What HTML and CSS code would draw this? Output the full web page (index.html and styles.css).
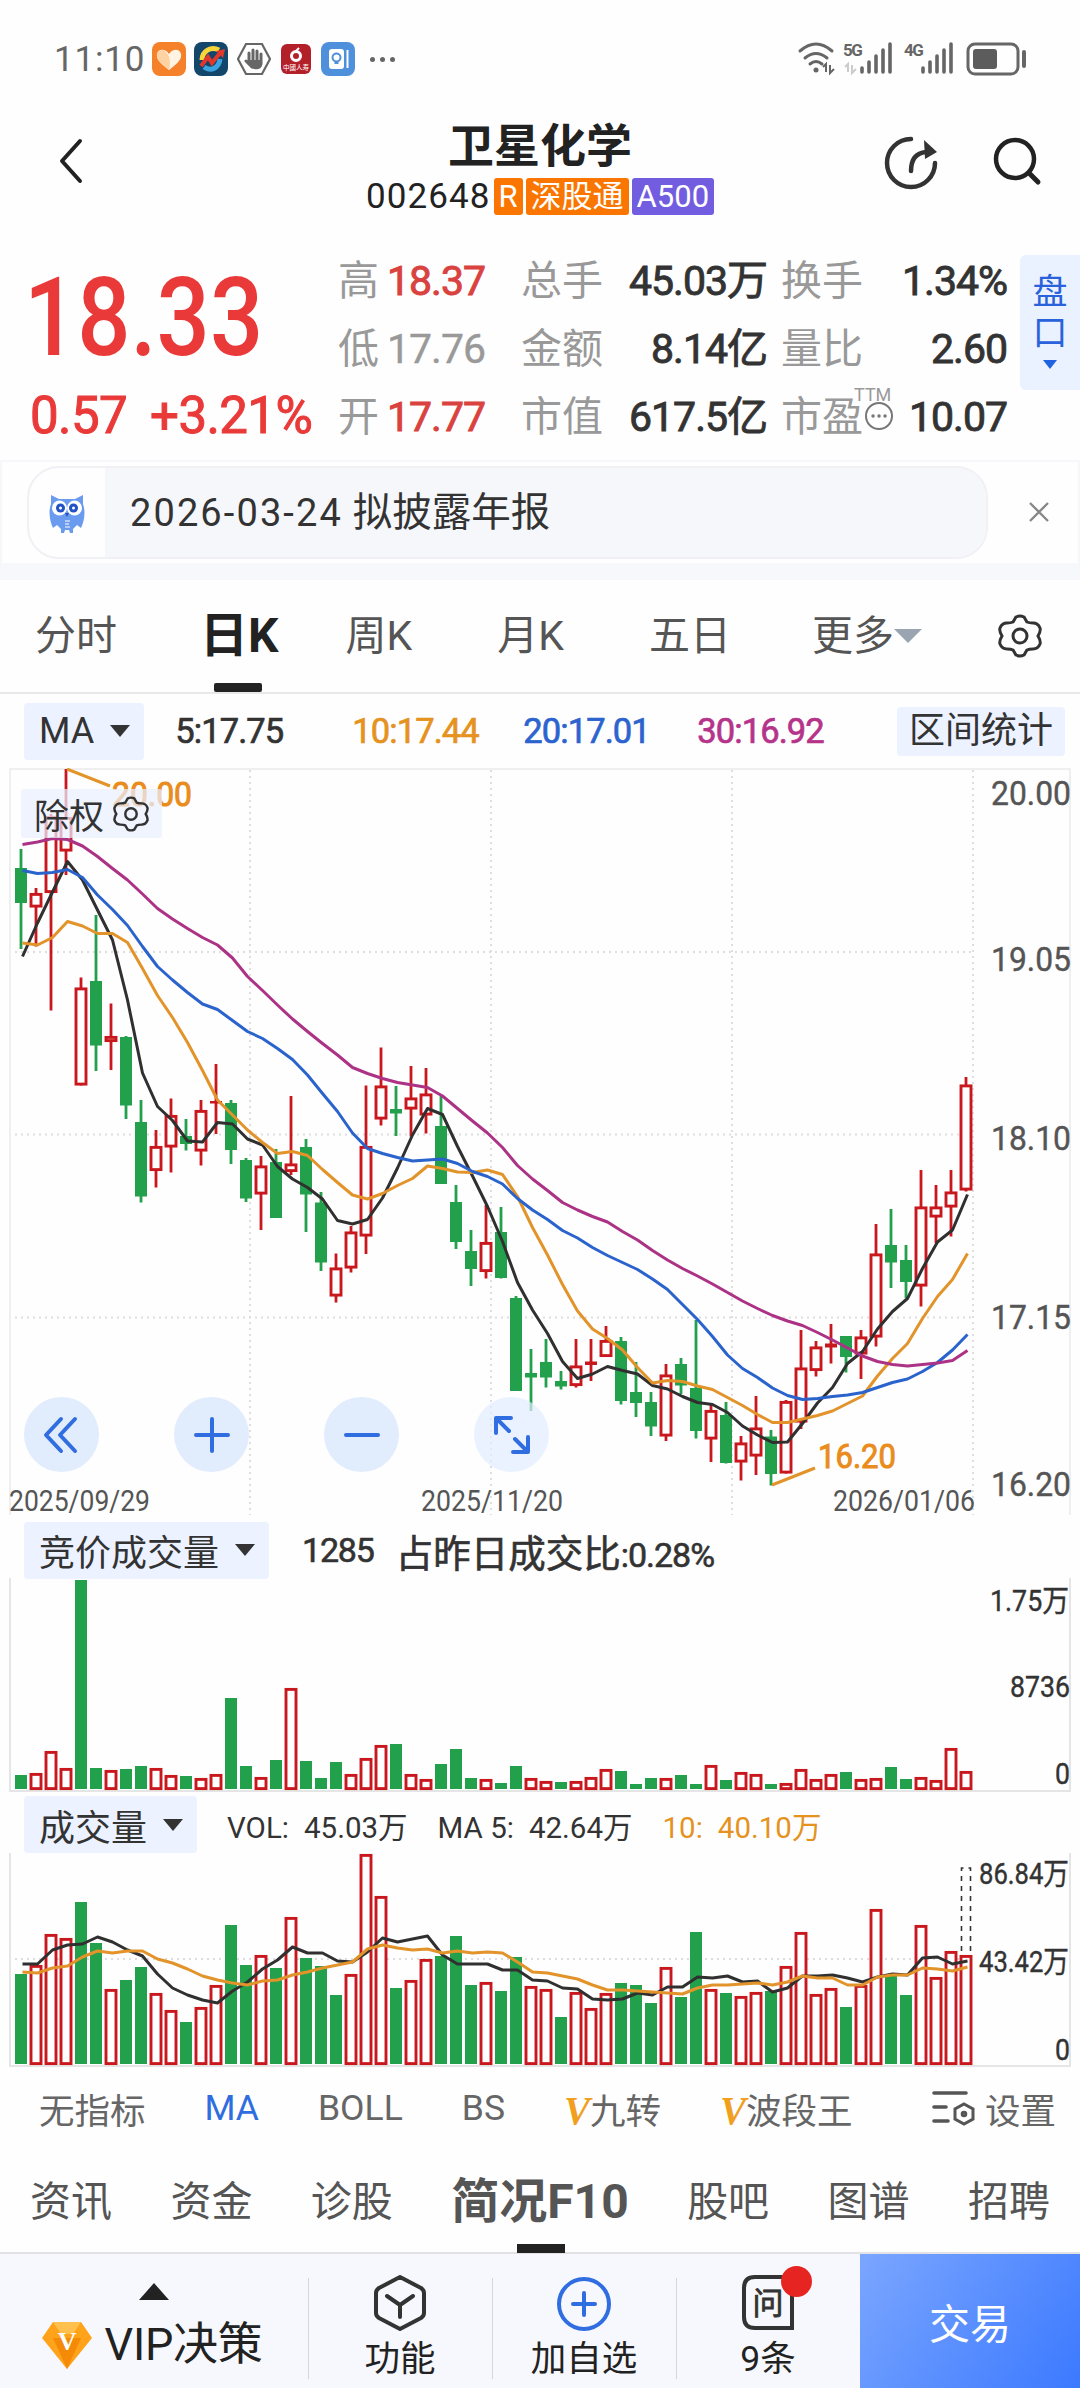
FILE: index.html
```html
<!DOCTYPE html>
<html lang="zh-CN">
<head>
    <meta charset="UTF-8">
    <meta name="viewport" content="width=device-width, initial-scale=1.0">
    <title>卫星化学 002648</title>
    <link rel="stylesheet" href="styles.css">
</head>
<body>
    <div class="status-bar">
        <span class="time">11:10</span>
        <svg class="app-icon" viewBox="0 0 34 34">
            <rect width="34" height="34" rx="8" fill="#f5812a"/>
            <path d="M17 28C8 21 4 17 5 12c1-5 8-6 12 0 4-6 11-5 12 0 1 5-3 9-12 16z" fill="#fff3e4"/>
            <path d="M17 28C8 21 4 17 5 12c1-4 6-5 9-2 4 4 5 11 3 18z" fill="#ffd2a3"/>
        </svg>
        <svg class="app-icon" viewBox="0 0 34 34">
            <rect width="34" height="34" rx="8" fill="#12466b"/>
            <path d="M25 8C17 4 8 9 8 18" fill="none" stroke="#f7d53a" stroke-width="5"/>
            <path d="M10 25c7 5 15 1 16-8" fill="none" stroke="#3aa3e0" stroke-width="5"/>
            <path d="M7 24l7-9 4 6 8-10" fill="none" stroke="#e2382c" stroke-width="4"/>
            <path d="M22 9l9-2-2 9z" fill="#e2382c"/>
        </svg>
        <svg class="app-icon" viewBox="0 0 34 34">
            <path d="M9 2h16l8 15-8 15H9L1 17z" fill="none" stroke="#666" stroke-width="2.2"/>
            <path d="M12 11v9M16 8v12M20 9v11M24 12v10M9 19l6 6" stroke="#666" stroke-width="3" stroke-linecap="round"/>
            <path d="M11 18h14v5c0 5-10 6-12 1z" fill="#666"/>
        </svg>
        <svg class="app-icon narrow" viewBox="0 0 30 30">
            <rect width="30" height="30" rx="6" fill="#b3202a"/>
            <circle cx="15" cy="12" r="4.5" fill="none" stroke="#fff" stroke-width="3"/>
            <path d="M14 8l4-4" stroke="#fff" stroke-width="2"/>
            <text x="15" y="26" font-size="6.5" text-anchor="middle" fill="#fff">中國人寿</text>
        </svg>
        <svg class="app-icon" viewBox="0 0 34 34">
            <rect width="34" height="34" rx="8" fill="#4f90dc"/>
            <rect x="8" y="7" width="15" height="20" rx="3" fill="#fff"/>
            <circle cx="15.500" cy="15.500" r="4" fill="none" stroke="#4f90dc" stroke-width="2"/>
            <path d="M13.500 21h4" stroke="#4f90dc" stroke-width="2"/>
            <path d="M26.500 8v18" stroke="#fff" stroke-width="2"/>
        </svg>
        <span class="more"><i></i><i></i><i></i></span>
        <svg class="signals" viewBox="0 0 232 36" width="232" height="36">
            <g fill="none" stroke="#666" stroke-width="3" stroke-linecap="round">
                <path d="M2 10q16-14 32 0M7 17q11-9 22 0M12 23q6-5 12 0"/>
            </g>
            <circle cx="18" cy="29" r="2.500" fill="#666"/>
            <path d="M28 31v-8l-3 3M32 24v8l4-4" fill="none" stroke="#666" stroke-width="2"/>
            <text x="45" y="15" class="net">5G</text>
            <path d="M50 31v-8l-3 3M54 24v8l4-4" fill="none" stroke="#ccc" stroke-width="2"/>
            <path d="M64 31v-4M71 31V21M78 31V15M85 31V9M92 31V3M125 31v-4M132 31V21M139 31V15M146 31V9M153 31V3" stroke="#666" stroke-width="3.600" stroke-linecap="round"/>
            <text x="106" y="15" class="net">4G</text>
            <rect x="170" y="3" width="50" height="30" rx="7" fill="none" stroke="#666" stroke-width="3"/>
            <rect x="175" y="8" width="24" height="20" rx="3" fill="#5c5c5c"/>
            <path d="M226 11v14" stroke="#666" stroke-width="4" stroke-linecap="round"/>
        </svg>
    </div>

    <header class="header">
        <svg class="back" width="26" height="46" viewBox="0 0 26 46"><path d="M22 3L4 23l18 20" fill="none" stroke="#222" stroke-width="4" stroke-linecap="round" stroke-linejoin="round"/></svg>
        <div class="stock">
            <h1>卫星化学</h1>
            <div class="code">
                <span>002648</span><b class="tag">R</b><b class="tag">深股通</b><b class="tag purple">A500</b>
            </div>
        </div>
        <svg class="share" width="56" height="56" viewBox="0 0 56 56">
            <path d="M28 4a24 24 0 1 0 24 24M28 4h-1M28 36c0-11 4-18 15-19" fill="none" stroke="#333" stroke-width="4.500" stroke-linecap="round"/>
            <path d="M41 5l13 12-12 7z" fill="#333"/>
        </svg>
        <svg class="search" width="50" height="50" viewBox="0 0 50 50">
            <circle cx="22" cy="22" r="19" fill="none" stroke="#222" stroke-width="4.500"/>
            <path d="M37 37l8 8" stroke="#222" stroke-width="5" stroke-linecap="round"/>
        </svg>
    </header>

    <section class="quote">
        <div class="price">
            <div class="last">18.33</div>
            <div class="change"><span>0.57</span><span>+3.21%</span></div>
        </div>
        <div class="stats">
            <label>高</label><b class="up">18.37</b><label>总手</label><b>45.03万</b><label>换手</label><b>1.34%</b>
            <label>低</label><b class="flat">17.76</b><label>金额</label><b>8.14亿</b><label>量比</label><b>2.60</b>
            <label>开</label><b class="up">17.77</b><label>市值</label><b>617.5亿</b><label class="pe">市盈<sup>TTM</sup><svg viewBox="0 0 30 30"><circle cx="15" cy="15" r="13"/><path d="M9 15h.1M15 15h.1M21 15h.1"/></svg></label><b>10.07</b>
        </div>
        <div class="side-tab"><span>盘</span><span>口</span><i class="arrow"></i></div>
    </section>

    <section class="notice">
        <div class="pill">
            <div class="owl">
                <svg width="36" height="40" viewBox="0 0 36 40">
                    <path d="M2 1l8 4h16l8-4v9c3 8 1 18-2 24l-4-3-4 4v4h-3l-1-3h-4l-1 3h-3v-4l-4-4-4 3C1 28-1 17 2 10z" fill="#6b9bef"/>
                    <circle cx="10.500" cy="14" r="7.500" fill="#fff"/><circle cx="25.500" cy="14" r="7.500" fill="#fff"/>
                    <circle cx="11.500" cy="14" r="4.500" fill="#2352c4"/><circle cx="24.500" cy="14" r="4.500" fill="#2352c4"/>
                    <circle cx="11.500" cy="14" r="1.500" fill="#fff"/><circle cx="24.500" cy="14" r="1.500" fill="#fff"/>
                    <path d="M16 19h4l-2 4z" fill="#2352c4"/>
                    <path d="M16 27h5M16 30h4M16 33h5" stroke="#fff" stroke-width="1.200"/>
                </svg>
            </div>
            <div class="notice-text"><span>2026-03-24</span> 拟披露年报</div>
        </div>
        <svg class="close" width="22" height="22" viewBox="0 0 22 22"><path d="M2 2l18 18M20 2L2 20" stroke="#888" stroke-width="2.400"/></svg>
    </section>

    <nav class="period">
        <span class="first">分时</span>
        <span class="active">日K</span>
        <span>周K</span>
        <span>月K</span>
        <span>五日</span>
        <span class="dropdown">更多<i></i></span>
        <svg width="44" height="44" viewBox="0 0 44 44"><use href="#gear"/></svg>
    </nav>

    <div class="ma-bar">
        <button class="pick">MA<i></i></button>
        <span class="ma5">5:17.75</span>
        <span class="ma10">10:17.44</span>
        <span class="ma20">20:17.01</span>
        <span class="ma30">30:16.92</span>
        <button class="range">区间统计</button>
    </div>

    <div class="chart">
        <svg id="kline" width="1080" height="750" viewBox="0 0 1080 750"></svg>
        <div class="rights">除权<svg width="36" height="36" viewBox="0 0 44 44"><use href="#gear"/></svg></div>
        <div class="tools">
            <button><svg viewBox="0 0 40 40"><path d="M19 4L4 20l15 16M33 4L18 20l15 16"/></svg></button>
            <button><svg viewBox="0 0 40 40"><path d="M20 4v32M4 20h32"/></svg></button>
            <button><svg viewBox="0 0 40 40"><path d="M4 20h32"/></svg></button>
            <button class="light"><svg viewBox="0 0 40 40"><path d="M4 18V3h15M5 4l12 12M36 22v15H21M35 36L23 24"/></svg></button>
        </div>
    </div>

    <div class="sub-bar auction">
        <button class="pick">竞价成交量<i></i></button>
        <span>1285</span>
        <span class="ratio">占昨日成交比<b>:0.28%</b></span>
    </div>
    <svg id="auction" class="sub-chart" width="1080" height="216" viewBox="0 0 1080 216"></svg>

    <div class="sub-bar volume">
        <button class="pick">成交量<i></i></button>
        <span>VOL:&ensp;45.03万</span>
        <span>MA 5:&ensp;42.64万</span>
        <span class="ma10">10:&ensp;40.10万</span>
    </div>
    <svg id="volume" class="sub-chart" width="1080" height="216" viewBox="0 0 1080 216"></svg>

    <nav class="indicators">
        <span>无指标</span>
        <span class="on">MA</span>
        <span>BOLL</span>
        <span>BS</span>
        <span><em>V</em>九转</span>
        <span><em>V</em>波段王</span>
        <span class="setting">
            <svg width="44" height="36" viewBox="0 0 44 36" fill="none" stroke="#555" stroke-width="3.600" stroke-linecap="round">
                <path d="M2 3h32M2 17h12M2 31h14"/><path d="M32 14l9 5v10l-9 5-9-5V19z" stroke-width="3"/><circle cx="32" cy="24" r="1.500"/>
            </svg>设置
        </span>
    </nav>

    <nav class="sections">
        <span>资讯</span><span>资金</span><span>诊股</span><span class="active">简况F10</span><span>股吧</span><span>图谱</span><span>招聘</span>
    </nav>

    <footer class="bottom">
        <div class="vip">
            <i class="up-arrow"></i>
            <div>
                <svg width="50" height="47" viewBox="0 0 50 47">
                    <path d="M11 0h28l11 16-25 31L0 16z" fill="#ffa31a"/>
                    <path d="M11 0h28l-8 12H19z" fill="#ffc04d"/><path d="M25 47L11 16h28z" fill="#f58a07"/>
                    <text x="25" y="28" class="gem">V</text>
                </svg>VIP决策
            </div>
        </div>
        <div class="item">
            <svg width="56" height="58" viewBox="0 0 56 58" fill="none" stroke="#333" stroke-width="4" stroke-linecap="round" stroke-linejoin="round"><path d="M28 3l21 11q3 2 3 5v20q0 3-3 5L28 55 7 44q-3-2-3-5V19q0-3 3-5zM15 22l13 9 13-9M28 31v12"/></svg>
            <span>功能</span>
        </div>
        <div class="item">
            <svg width="56" height="58" viewBox="0 0 56 58" fill="none" stroke="#2f6de0" stroke-width="4" stroke-linecap="round"><circle cx="28" cy="30" r="25"/><path d="M28 19v22M17 30h22"/></svg>
            <span>加自选</span>
        </div>
        <div class="item">
            <svg width="56" height="58" viewBox="0 0 56 58"><path d="M15 3h26q11 0 11 11v40H15Q4 54 4 43V14Q4 3 15 3z" fill="none" stroke="#333" stroke-width="4"/><text x="28" y="40" class="ask">问</text></svg>
            <span>9条</span>
            <i class="dot"></i>
        </div>
        <button class="trade">交易</button>
    </footer>

    <svg width="0" height="0" class="defs">
        <symbol id="gear" viewBox="0 0 44 44">
            <path d="M18 3q4-2 8 0l3 5q2 1 6 1 5 0 7 5 1 3-2 8 3 5 2 8-2 5-7 5-4 0-6 1l-3 5q-4 2-8 0l-3-5q-2-1-6-1-5 0-7-5-1-3 2-8-3-5-2-8 2-5 7-5 4 0 6-1z" fill="none" stroke="#333" stroke-width="3"/>
            <circle cx="22" cy="22" r="7" fill="none" stroke="#333" stroke-width="3"/>
        </symbol>
    </svg>

    <script src="chart.js"></script>
</body>
</html>
```
FILE: styles.css
```css
* {
    margin: 0;
    padding: 0;
    box-sizing: border-box;
}

body {
    width: 1080px;
    height: 2388px;
    overflow: hidden;
    background: #fefefe;
    color: #333;
    font-family: Roboto, "Noto Sans CJK SC", sans-serif;
    display: flex;
    flex-direction: column;
}

button {
    border: none;
    background: none;
    font: inherit;
    color: inherit;
}

b, i, em {
    font-style: normal;
    font-weight: 400;
}

.defs {
    position: absolute;
}

/* status bar */
.status-bar {
    height: 118px;
    padding: 0 50px 0 54px;
    display: flex;
    align-items: center;
    color: #666;
}

.time {
    width: 98px;
    font-size: 35px;
    letter-spacing: 0.8px;
}

.app-icon {
    width: 34px;
    height: 34px;
    margin-right: 8.4px;
}

.app-icon.narrow {
    width: 30px;
    height: 30px;
    margin: 0 10px 0 2px;
}

.more {
    display: flex;
    gap: 5px;
    margin-left: 6px;
}

.more i {
    width: 5px;
    height: 5px;
    border-radius: 50%;
    background: #666;
}

.signals {
    margin-left: auto;
    overflow: visible;
}

.net {
    font-size: 17px;
    font-weight: 700;
    fill: #666;
    letter-spacing: -1.5px;
}

/* title */
.header {
    height: 122px;
    padding: 0 35px 0 58px;
    display: flex;
    align-items: flex-start;
}

.back {
    margin-top: 20px;
}

.stock {
    width: 400px;
    margin-left: 256px;
    text-align: center;
}

h1 {
    font-size: 46px;
    line-height: 56px;
    color: #222;
}

.code {
    display: flex;
    justify-content: center;
    gap: 3px;
    margin-top: 4px;
    line-height: 37px;
    font-size: 35px;
    color: #222;
}

.code span {
    letter-spacing: 1.1px;
}

.tag {
    height: 37px;
    padding: 0 5px;
    border-radius: 3px;
    background: #fa7600;
    color: #fff;
    font-size: 31px;
}

.tag.purple {
    background: #725de0;
}

.share {
    margin: 17px 0 0 143px;
}

.search {
    margin: 19px 0 0 54px;
}

/* quote */
.quote {
    height: 220px;
    display: flex;
}

.price {
    width: 338px;
    padding: 20px 0 0 30px;
    color: #e93a39;
}

.last {
    font-size: 109px;
    font-weight: 500;
    line-height: 116px;
    transform: scaleX(0.86);
    transform-origin: 0 0;
    margin-left: -6px;
}

.change {
    display: flex;
    gap: 23px;
    margin-top: 13px;
    font-size: 51px;
    line-height: 54px;
    letter-spacing: -0.6px;
    white-space: nowrap;
    -webkit-text-stroke: 1px currentColor;
}

.stats {
    width: 669px;
    display: grid;
    grid-template-columns: 44px 103px 120px 162px 92px 148px;
    grid-template-rows: repeat(3, 68px);
    margin-top: 7px;
    line-height: 69px;
    font-size: 41px;
    white-space: nowrap;
}

.stats label {
    color: #999;
}

.stats b {
    text-align: right;
    letter-spacing: -1px;
    -webkit-text-stroke: 0.9px currentColor;
}

.stats label:nth-of-type(3n+2) {
    padding-left: 36px;
}

.stats label:nth-of-type(3n) {
    padding-left: 14px;
}

.stats .up {
    color: #d9423f;
}

.stats .flat {
    color: #999;
    -webkit-text-stroke: 0.4px currentColor;
}

.pe {
    position: relative;
}

.pe sup {
    position: absolute;
    left: 87px;
    top: 0;
    font-size: 18px;
    line-height: 24px;
}

.pe svg {
    position: absolute;
    left: 97px;
    top: 18px;
    width: 30px;
    height: 30px;
    fill: #fefefe;
    stroke: #777;
    stroke-width: 2;
}

.pe path {
    stroke-width: 3.4;
    stroke-linecap: round;
}

.side-tab {
    width: 60px;
    height: 135px;
    margin: 15px 0 0 13px;
    padding-top: 17px;
    border-radius: 6px 0 0 6px;
    background: #ebf2ff;
    color: #2a62dc;
    font-size: 35px;
    line-height: 41px;
    display: flex;
    flex-direction: column;
    align-items: center;
}

.arrow {
    margin-top: 6px;
    border: 7px solid transparent;
    border-top: 9px solid #1f63e0;
    border-bottom: 0;
}

/* notice */
.notice {
    height: 120px;
    border: 2px solid #f6f7fa;
    border-bottom: 17px solid #f7f8fc;
    padding: 4px 28px 0 25px;
    display: flex;
    align-items: flex-start;
}

.pill {
    width: 963px;
    height: 93px;
    display: flex;
    border: 2px solid #f0f0f5;
    border-radius: 32px;
    overflow: hidden;
}

.owl {
    width: 76px;
    padding: 26px 0 0 20px;
}

.notice-text {
    flex: 1;
    padding-left: 25px;
    background: #f6f7fb;
    font-size: 39.5px;
    line-height: 90px;
}

.notice-text span {
    font-size: 38px;
    letter-spacing: 2.1px;
}

.close {
    margin: 35px 0 0 40px;
}

/* period tabs */
.period {
    height: 114px;
    padding: 0 38px 0 35px;
    border-bottom: 2px solid #e8e8e8;
    display: flex;
    align-items: center;
    font-size: 41px;
    line-height: 60px;
    color: #555;
}

.period span {
    margin-right: 85px;
}

.period .first {
    margin-right: 83px;
}

.period .active {
    position: relative;
    margin-right: 67px;
    font-size: 48px;
    font-weight: 700;
    color: #222;
}

.period .active::after {
    content: "";
    position: absolute;
    left: 14px;
    bottom: -26px;
    width: 48px;
    height: 9px;
    background: #222;
    border-radius: 2px;
}

.period .dropdown {
    display: flex;
    align-items: center;
    margin: 0 auto 0 -4px;
}

.dropdown i {
    border: 14px solid transparent;
    border-top-color: #9aa5b1;
    border-bottom: 0;
}

/* MA values */
.ma-bar {
    height: 74px;
    padding: 0 15px 0 24px;
    display: flex;
    align-items: center;
    font-size: 34.5px;
    letter-spacing: -0.9px;
}

.ma-bar span {
    -webkit-text-stroke: 0.7px currentColor;
}

.pick {
    height: 57px;
    padding: 0 14px 0 15px;
    border-radius: 4px;
    background: #ecf2ff;
    display: flex;
    align-items: center;
    font-size: 36px;
    letter-spacing: 0;
}

.pick i {
    margin-left: 16px;
    border: 10.5px solid transparent;
    border-top: 12px solid #333;
    border-bottom: 0;
}

.ma5 {
    width: 177px;
    margin-left: 31px;
}

.ma10 {
    color: #e5921f;
}

.ma-bar .ma10 {
    width: 171px;
}

.ma20 {
    width: 174px;
    color: #2c63cf;
}

.ma30 {
    color: #b5348a;
}

.range {
    height: 49px;
    margin-left: auto;
    padding: 0 12px;
    border-radius: 4px;
    background: #ecf2ff;
    font-size: 36px;
    letter-spacing: 0;
    line-height: 49px;
}

/* charts */
.chart {
    position: relative;
    height: 750px;
}

svg {
    display: block;
    flex-shrink: 0;
}

.rights {
    position: absolute;
    left: 21px;
    top: 21px;
    width: 141px;
    height: 49px;
    padding-left: 13px;
    border-radius: 3px;
    background: rgba(234, 240, 255, 0.72);
    display: flex;
    align-items: center;
    gap: 9px;
    font-size: 35px;
}

.tools {
    position: absolute;
    left: 24px;
    top: 629px;
    display: flex;
    gap: 75px;
}

.tools button {
    width: 75px;
    height: 75px;
    border-radius: 50%;
    background: #e1ecfd;
    display: flex;
    align-items: center;
    justify-content: center;
}

.tools .light {
    background: rgba(226, 236, 255, 0.7);
}

.tools svg {
    width: 40px;
    height: 40px;
    fill: none;
    stroke: #2f6de0;
    stroke-width: 4;
    stroke-linecap: round;
    stroke-linejoin: round;
}

.sub-bar {
    display: flex;
    align-items: center;
    padding-left: 24px;
    white-space: nowrap;
}

.auction {
    height: 60px;
    padding-top: 4px;
    font-size: 34px;
}

.auction span {
    margin-left: 33px;
    letter-spacing: -1.2px;
    -webkit-text-stroke: 0.6px currentColor;
}

.auction .ratio {
    margin-left: 22px;
    font-size: 37.5px;
    letter-spacing: 0;
}

.ratio b {
    font-size: 34px;
    letter-spacing: -1px;
}

.volume {
    height: 59px;
    padding-top: 2px;
    font-size: 29.5px;
}

.volume span {
    margin-left: 30px;
}

.grid {
    stroke: #dedede;
    stroke-width: 2;
    stroke-dasharray: 2 4;
}

.frame {
    fill: none;
    stroke: #e5e5e5;
    stroke-width: 2;
}

.axis {
    fill: #555;
    stroke: #555;
    stroke-width: 0.4;
    font-size: 33px;
}

.axis.dark {
    fill: #333;
    stroke: #333;
    font-size: 30px;
}

.mark {
    fill: #e98c1c;
    stroke: #e98c1c;
    font-size: 34px;
}

.date {
    fill: #555;
    font-size: 29px;
}

.line {
    fill: none;
    stroke-width: 3;
    stroke-linejoin: round;
}

/* indicators */
.indicators {
    height: 82px;
    padding: 0 24px 4px 39px;
    display: flex;
    align-items: center;
    font-size: 35.5px;
    color: #666;
}

.indicators span {
    margin-right: 59px;
}

.indicators .on {
    color: #2f6de0;
}

.indicators em {
    font-family: "Liberation Serif", serif;
    font-size: 39px;
    line-height: 36px;
    font-style: italic;
    font-weight: 700;
    color: #f0a01e;
}

.indicators .setting {
    display: flex;
    align-items: center;
    gap: 9px;
    margin: 0 0 0 auto;
}

.sections {
    height: 103px;
    padding: 0 30px;
    border-bottom: 2px solid #e2e2e4;
    display: flex;
    justify-content: space-between;
    align-items: center;
    font-size: 41px;
    line-height: 60px;
    color: #555;
}

.sections .active {
    position: relative;
    font-size: 48px;
    font-weight: 700;
}

.sections .active::after {
    content: "";
    position: absolute;
    left: 66px;
    bottom: -21px;
    width: 48px;
    height: 9px;
    background: #222;
}

/* bottom bar */
.bottom {
    flex: 1;
    display: flex;
    background: #f7f8fd;
    color: #222;
}

.vip {
    width: 308px;
    display: flex;
    flex-direction: column;
    align-items: center;
}

.vip div {
    display: flex;
    align-items: center;
    gap: 13px;
    margin: 13px 4px 0 0;
    font-size: 45px;
    line-height: 64px;
    letter-spacing: -0.3px;
}

.up-arrow {
    margin-top: 29px;
    border: 15px solid transparent;
    border-bottom: 17px solid #222;
    border-top: 0;
}

.gem {
    font-family: "Liberation Serif", serif;
    font-size: 26px;
    font-weight: 700;
    fill: #fff;
    text-anchor: middle;
}

.item {
    position: relative;
    width: 184px;
    padding-top: 20px;
    display: flex;
    flex-direction: column;
    align-items: center;
    font-size: 35.5px;
    line-height: 54px;
}

.item::before {
    content: "";
    position: absolute;
    left: 0;
    top: 24px;
    height: 101px;
    border-left: 1px solid #d5d6dc;
}

.ask {
    font-size: 31px;
    fill: #333;
    stroke: #333;
    stroke-width: 0.8;
    text-anchor: middle;
}

.dot {
    position: absolute;
    left: 105px;
    top: 12px;
    width: 31px;
    height: 31px;
    border-radius: 50%;
    background: #e62421;
}

.trade {
    flex: 1;
    background: linear-gradient(125deg, #7ba6ff, #3b79ff);
    color: #fff;
    font-size: 41px;
}
```
FILE: chart.js
```js
const RED = '#c9171e';
const GREEN = '#22a04b';
const BLACK = '#303030';
const ORANGE = '#e2932a';

// [rise, high, body top, body bottom, low], y inside the chart
const candles = [
    [0, 81, 100, 135, 181], [1, 120, 125, 139.5, 178.5], [1, 46, 48, 125, 242.5], [1, 1, 49, 83.5, 107],
    [1, 209.5, 219.5, 317.5, 317.5], [0, 147, 213, 277.5, 303], [1, 235.5, 268, 274, 302], [0, 268, 269, 337.5, 351],
    [0, 332, 354, 428.5, 434.5], [1, 362, 378, 403, 419.5], [1, 330.5, 347, 379.5, 404.5], [0, 351, 368, 376, 382.5],
    [1, 332, 342, 383.5, 397.5], [1, 296, 333, 335.5, 366], [0, 332, 335, 382, 396], [0, 390, 392, 430.5, 434],
    [1, 388, 397.5, 426.5, 462], [0, 381, 394, 450, 450], [1, 328, 395.5, 404, 407], [0, 371, 379, 426.5, 464],
    [0, 424, 434.5, 494.5, 503], [1, 485.5, 499.5, 528.5, 534.5], [1, 458, 463.5, 500.5, 504.5], [1, 317.5, 378, 468.5, 486],
    [1, 279.5, 317.5, 351.5, 357.5], [0, 318, 341, 345.5, 368], [1, 298, 329.5, 341.5, 368.5], [1, 300, 325.5, 347.5, 365.5],
    [0, 328, 358, 416, 416], [0, 417, 434, 474, 481], [0, 462, 483, 501, 518], [1, 437, 474, 504, 510.5],
    [0, 439, 464, 510, 510.5], [0, 528, 530, 623, 623], [0, 581, 605, 609.5, 643], [0, 571, 594, 609.5, 619.5],
    [0, 603, 613, 618.5, 621.5], [1, 571, 597.5, 618, 619.5], [1, 571, 593.5, 597, 613], [1, 558, 572, 589, 589],
    [0, 569, 573, 633, 636.5], [0, 594, 624, 635, 649], [0, 624, 634, 658.5, 668], [1, 596, 606.5, 668.5, 673],
    [0, 590, 596, 617.5, 626], [0, 552, 620, 663, 670.5], [1, 637, 642, 671.5, 694], [0, 634, 647, 695, 695.5],
    [1, 668, 674.5, 694.5, 712.5], [1, 628, 659.5, 688.5, 707], [0, 662, 668.5, 706, 717.5], [1, 632, 633, 705.5, 705.5],
    [1, 562, 599.5, 654.5, 661], [1, 573, 578.5, 603, 608.5], [1, 556, 575.5, 579.5, 595.5], [0, 568, 568, 589, 604.5],
    [1, 562, 568.5, 586.5, 611], [1, 456, 485.5, 569.5, 578.5], [0, 441, 477, 494.5, 520], [0, 477, 492, 514, 530],
    [1, 402, 438.5, 518.5, 538.5], [1, 417, 438.5, 449.5, 475], [1, 402, 423.5, 439.5, 468.5], [1, 309, 316.5, 422.5, 423.5]
];

const ma5 = [188.5, 155, 124, 93.5, 112, 142, 172, 232, 305, 338.5, 352.5, 373, 374, 354.5, 356, 371, 377, 398.5, 411, 419.5, 431, 452.5, 456, 451.5, 430, 400, 367, 340.5, 346.5, 378.5, 408, 438.5, 473.5, 514.5, 542, 565.5, 593.5, 610.5, 606, 598.5, 602.5, 606, 617.5, 621, 628.5, 634.5, 636.5, 644.5, 658, 667, 674.5, 674, 655.5, 635, 619.5, 595.5, 583.5, 561, 543.5, 530.5, 500.5, 474, 462, 426.5];
const ma10 = [175, 177, 169.5, 153.5, 158, 165.5, 165.5, 174.5, 200.5, 227.5, 249.5, 274.5, 302.5, 332, 347, 362, 374.5, 385.5, 383.5, 387.5, 401.5, 414.5, 427, 431, 425.5, 417.5, 410.5, 398, 400.5, 404, 404.5, 402, 406.5, 428.5, 459.5, 487, 516.5, 543, 561, 570.5, 582, 599.5, 615, 612.5, 613.5, 618, 621.5, 629.5, 637.5, 646.5, 654.5, 654.5, 651, 647.5, 643, 635.5, 628, 608, 590.5, 575.5, 550.5, 528.5, 511.5, 485.5];
const ma20 = [102.5, 105.5, 104.5, 101.5, 109.5, 127, 141.5, 157.5, 178.5, 198.5, 212, 224.5, 236, 241.5, 252.5, 263.5, 270.5, 280.5, 291.5, 307, 325.5, 343.5, 365, 380.5, 385.5, 389.5, 393, 392, 391, 395.5, 403.5, 408.5, 416, 430.5, 442, 451.5, 462.5, 470, 479.5, 487.5, 494.5, 501.5, 511, 521.5, 536.5, 551.5, 568.5, 587, 600.5, 609.5, 620, 627.5, 631.5, 630.5, 628.5, 627, 624.5, 619.5, 614.5, 611, 603.5, 594.5, 582, 566.5];
const ma30 = [76.5, 74, 70.5, 71.5, 78, 88.5, 100.5, 112, 126, 140.5, 151, 160.5, 169.5, 177, 190, 208.5, 222.5, 237, 251, 263.5, 275.5, 287, 299.5, 305.5, 310.5, 314.5, 317, 319.5, 328, 340.5, 353, 365, 379.5, 397.5, 411, 422.5, 434.5, 442, 448.5, 454, 463.5, 472, 482.5, 492, 500.5, 508, 516, 524.5, 533, 540.5, 547.5, 553, 557.5, 564.5, 572, 580, 588, 593.5, 596.5, 598, 596.5, 595, 592.5, 582.5];

// bar heights, negative = falling day
const auction = [-14, 16, 38, 21, -209, -21, 19, -20, -23, 21, 14, -13, 11, 15, -91, -23, 12, -29, 101, -28, -11, -27, 15, 31, 44, -45, 15, 10, -25, -40, -11, 10, -6, -23, 11, 8, -7, 8, 12, 20, -18, -5, -11, 11, -14, -5, 24, -9, 17, 15, -5, 6, 20, 10, 15, -17, 10, 11, -22, -10, 12, 9, 41, 18];
const volume = [-90, 99, 130, 126, -162, -121, 75, -84, -97, 71, 54, -42, 57, 79, -139, -99, 109, -96, 147, -106, -98, -69, 90, 210, 168, -76, 84, 105, -108, -128, -79, 82, -73, -107, 78, 75, -47, 72, 56, 71, -81, -79, -61, 97, -67, -132, 75, -71, 68, 72, -73, 98, 132, 70, 76, -57, 79, 155, -89, -69, 139, 87, 113, 109];
const vol5 = [100, 100, 114, 119, 120, 127, 122, 114, 108, 90, 76, 69, 64, 61, 73, 82, 95, 104, 117, 111, 111, 103, 102, 112, 126, 122, 125, 128, 109, 100, 100, 100, 94, 94, 84, 83, 76, 75, 65, 64, 65, 71, 69, 77, 77, 87, 86, 88, 82, 83, 72, 76, 88, 88, 89, 86, 82, 87, 90, 89, 106, 107, 100, 103];
const vol10 = [92, 91, 96, 98, 107, 113, 111, 113, 113, 105, 101, 95, 88, 84, 81, 79, 83, 84, 89, 92, 96, 99, 102, 115, 119, 116, 114, 115, 111, 113, 111, 112, 111, 102, 92, 91, 88, 85, 79, 74, 74, 73, 72, 71, 70, 76, 79, 79, 80, 81, 79, 82, 88, 86, 86, 79, 79, 87, 89, 89, 96, 95, 93, 97];

const x = i => 21 + 15 * i;

function box(up, cx, top, bottom) {
    if (up && bottom - top > 5) {
        return `<rect x="${cx - 5}" y="${top + 1.4}" width="10" height="${bottom - top - 2.8}" fill="#fefefe" stroke="${RED}" stroke-width="2.9"/>`;
    }
    return `<rect x="${cx - 6}" y="${top}" width="12" height="${bottom - top}" fill="${up ? RED : GREEN}"/>`;
}

function line(values, color) {
    const points = values.map((v, i) => `${x(i) + 1.5},${v}`).join(' ');
    return `<polyline class="line" points="${points}" stroke="${color}"/>`;
}

function text(cls, right, y, width, value) {
    return `<text class="${cls}" x="${right - width}" y="${y}" textLength="${width}" lengthAdjust="spacingAndGlyphs">${value}</text>`;
}

function drawKline() {
    let out = '<path class="frame" d="M10 747V1H1070V747" opacity=".6"/>';
    [184, 366.5, 549.5].forEach(y => out += `<path class="grid" d="M15 ${y}H973"/>`);
    [250, 491, 732, 973].forEach(gx => out += `<path class="grid" d="M${gx} 2V747"/>`);
    candles.forEach(([up, high, top, bottom, low], i) => {
        out += `<path d="M${x(i)} ${high}V${low}" stroke="${up ? RED : GREEN}" stroke-width="2.8"/>`;
        out += box(up, x(i), top, bottom);
    });
    out += line(ma5, BLACK) + line(ma10, ORANGE) + line(ma20, '#2a63cc') + line(ma30, '#ac3285');
    out += `<path class="line" d="M67 1L110 18M772 717L815 700" stroke="${ORANGE}"/>`;
    out += text('mark', 192, 38, 80, '20.00') + text('mark', 896, 700, 78, '16.20');
    [['20.00', 37], ['19.05', 203], ['18.10', 382], ['17.15', 561], ['16.20', 728]].forEach(([v, y]) => {
        out += text('axis', 1071, y, 80, v);
    });
    out += text('date', 150, 743, 141, '2025/09/29') + text('date', 563, 743, 142, '2025/11/20') + text('date', 975, 743, 142, '2026/01/06');
    document.getElementById('kline').innerHTML = out;
}

function bars(values, base) {
    return values.map((v, i) => box(v > 0, x(i), base - Math.abs(v), v > 0 ? base + 1 : base)).join('');
}

function drawAuction() {
    let out = '<path class="frame" d="M10 0V213H1070V0"/>' + bars(auction, 211);
    out += text('axis dark', 1069, 33, 79, '1.75万') + text('axis dark', 1070, 119, 60, '8736') + text('axis dark', 1070, 206, 15, '0');
    document.getElementById('auction').innerHTML = out;
}

function drawVolume() {
    let out = '<path class="frame" d="M10 0V213H1070V0"/><path class="grid" d="M15 106H973"/>' + bars(volume, 211);
    out += '<path d="M961.5 98V15H970.500V98" fill="none" stroke="#333" stroke-width="1.6" stroke-dasharray="5 5"/>';
    out += line(vol5.map(v => 211 - v), BLACK) + line(vol10.map(v => 211 - v), ORANGE);
    out += text('axis dark', 1069, 31, 90, '86.84万') + text('axis dark', 1069, 119, 90, '43.42万') + text('axis dark', 1070, 207, 15, '0');
    document.getElementById('volume').innerHTML = out;
}

drawKline();
drawAuction();
drawVolume();
```
